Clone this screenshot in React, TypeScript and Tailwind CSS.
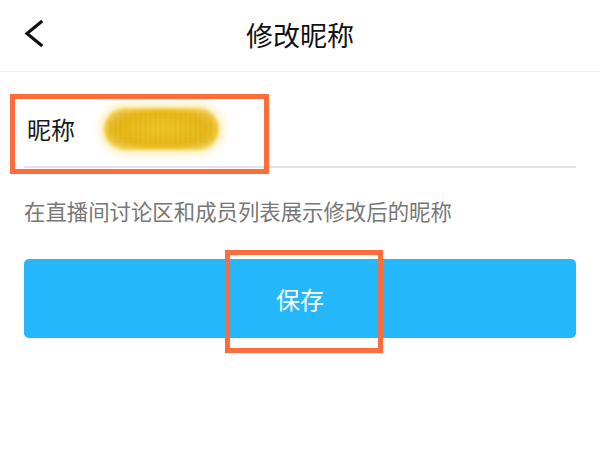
export default function App() {
  return (
    <div className="relative w-[600px] h-[450px] bg-white overflow-hidden font-['Noto_Sans_CJK_SC',sans-serif]">
      {/* header */}
      <div className="h-[72px] grid grid-cols-[1fr_auto_1fr] items-center px-[22px] border-b border-[#efefef]">
        <svg className="-mt-[3px]" width="24" height="28" viewBox="0 0 24 28" fill="none">
          <path d="M19 2 L5 13.5 L19 25" stroke="#111" strokeWidth="3.2" strokeLinecap="square" />
        </svg>
        <span className="text-[27px] leading-none text-[#111] -mt-[3px]">修改昵称</span>
        <span />
      </div>

      <div className="px-[24px]">
        {/* nickname field */}
        <div className="mt-[19px] h-[77px] flex items-center border-b-2 border-[#e3e3e3]">
          <span className="text-[24px] leading-none text-[#1a1a1a] ml-[3px]">昵称</span>
          <div className="relative ml-[29px] w-[115px] h-[42px] rounded-full blur-[1.5px] shadow-[0_0_8px_4px_rgba(242,200,40,0.35)] bg-[radial-gradient(ellipse_at_50%_50%,#f5cf25_0%,#efbe18_55%,#f6dc7a_100%)]">
            <div className="absolute inset-[4px] rounded-full opacity-60 bg-[radial-gradient(circle,rgba(70,55,20,0.7)_0.7px,transparent_1.3px)] bg-[length:5px_4px]" />
          </div>
        </div>

        {/* hint */}
        <p className="mt-[30px] text-[21.4px] leading-[25px] text-[#777]">在直播间讨论区和成员列表展示修改后的昵称</p>

        {/* save */}
        <button className="mt-[36px] w-full h-[79px] rounded-[5px] bg-[#24b7fc] text-white text-[24px] flex items-center justify-center">
          保存
        </button>
      </div>

      {/* annotation boxes */}
      <div className="absolute left-[10px] top-[94px] w-[259px] h-[80px] border-[5px] border-[#fd6d3c]" />
      <div className="absolute left-[225px] top-[250px] w-[158px] h-[103px] border-[5px] border-[#fd6d3c]" />
    </div>
  );
}
